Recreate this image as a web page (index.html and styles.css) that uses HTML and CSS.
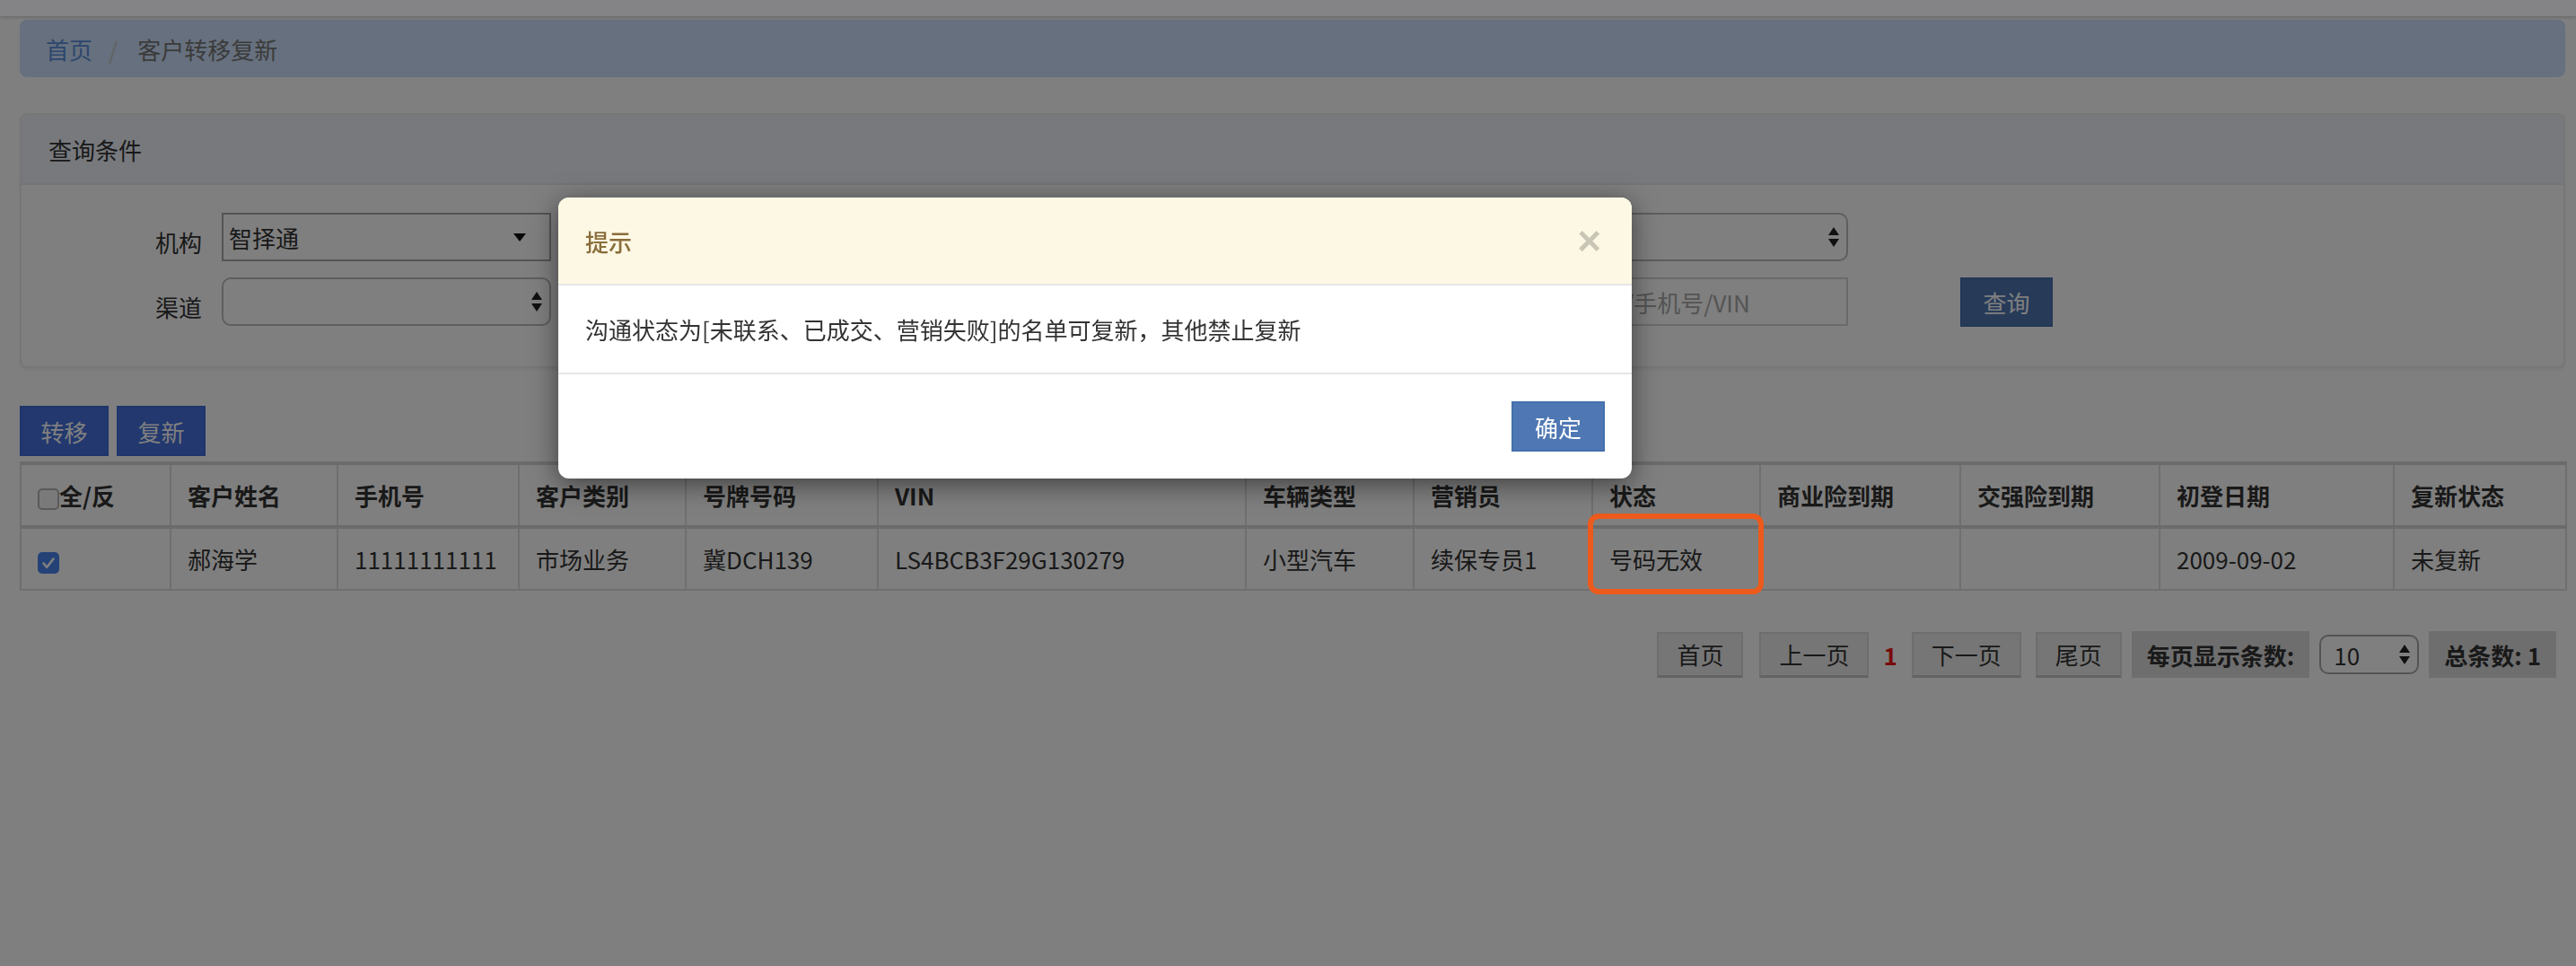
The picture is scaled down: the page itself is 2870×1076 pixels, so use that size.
FILE: index.html
```html
<!DOCTYPE html>
<html lang="zh-CN">
<head>
<meta charset="utf-8">
<title>客户转移复新</title>
<link rel="stylesheet" href="styles.css">
</head>
<body>
<div class="frame-top"></div>
<main class="page">
  <ol class="breadcrumb">
    <li><a href="#">首页</a></li>
    <li class="sep">/</li>
    <li class="active">客户转移复新</li>
  </ol>

  <section class="panel">
    <div class="panel-heading">查询条件</div>
    <div class="panel-body">
      <form class="query-form">
        <label class="form-label">机构</label>
        <div class="select square">
          <select><option>智择通</option></select>
          <svg class="caret" width="14" height="9" viewBox="0 0 14 9"><path d="M0 0h14L7 9z" fill="#111"/></svg>
        </div>
        <label class="form-label">营销员</label>
        <div class="select rounded">
          <select><option></option></select>
          <svg class="updown" width="12" height="22" viewBox="0 0 12 22"><path d="M6 0l6 9H0z M0 13h12l-6 9z" fill="#222"/></svg>
        </div>
        <label class="form-label">沟通状态</label>
        <div class="select rounded">
          <select><option></option></select>
          <svg class="updown" width="12" height="22" viewBox="0 0 12 22"><path d="M6 0l6 9H0z M0 13h12l-6 9z" fill="#222"/></svg>
        </div>
        <span></span>
        <span></span>

        <label class="form-label">渠道</label>
        <div class="select rounded">
          <select><option></option></select>
          <svg class="updown" width="12" height="22" viewBox="0 0 12 22"><path d="M6 0l6 9H0z M0 13h12l-6 9z" fill="#222"/></svg>
        </div>
        <label class="form-label">复新状态</label>
        <div class="select rounded">
          <select><option></option></select>
          <svg class="updown" width="12" height="22" viewBox="0 0 12 22"><path d="M6 0l6 9H0z M0 13h12l-6 9z" fill="#222"/></svg>
        </div>
        <label class="form-label">客户信息</label>
        <input class="text-input" type="text" placeholder="客户姓名/手机号/VIN">
        <span></span>
        <button type="button" class="btn btn-primary btn-query">查询</button>
      </form>
    </div>
  </section>

  <div class="toolbar">
    <button type="button" class="btn btn-action">转移</button>
    <button type="button" class="btn btn-action">复新</button>
  </div>

  <table class="grid">
    <colgroup>
      <col class="w-chk"><col class="w-name"><col class="w-phone"><col class="w-type">
      <col class="w-plate"><col class="w-vin"><col class="w-car"><col class="w-sales">
      <col class="w-state"><col class="w-biz"><col class="w-tci"><col class="w-reg"><col class="w-renew">
    </colgroup>
    <thead>
      <tr>
        <th><span class="check"></span>全/反</th>
        <th>客户姓名</th>
        <th>手机号</th>
        <th>客户类别</th>
        <th>号牌号码</th>
        <th>VIN</th>
        <th>车辆类型</th>
        <th>营销员</th>
        <th>状态</th>
        <th>商业险到期</th>
        <th>交强险到期</th>
        <th>初登日期</th>
        <th>复新状态</th>
      </tr>
    </thead>
    <tbody>
      <tr>
        <td><span class="check checked"><svg width="24" height="24" viewBox="0 0 24 24"><polyline points="6.5,12.5 10.3,16.8 17.5,7.5" fill="none" stroke="#fff" stroke-width="2.6" stroke-linecap="round" stroke-linejoin="round"/></svg></span></td>
        <td>郝海学</td>
        <td>11111111111</td>
        <td>市场业务</td>
        <td>冀DCH139</td>
        <td>LS4BCB3F29G130279</td>
        <td>小型汽车</td>
        <td>续保专员1</td>
        <td class="marked">号码无效<span class="annotation"></span></td>
        <td></td>
        <td></td>
        <td>2009-09-02</td>
        <td>未复新</td>
      </tr>
    </tbody>
  </table>

  <div class="pager">
    <button type="button" class="pg-btn">首页</button>
    <button type="button" class="pg-btn pg-prev">上一页</button>
    <span class="pg-current">1</span>
    <button type="button" class="pg-btn">下一页</button>
    <button type="button" class="pg-btn pg-last">尾页</button>
    <span class="pg-label">每页显示条数:</span>
    <div class="select pg-size">
      <select><option>10</option></select>
      <svg class="updown" width="12" height="22" viewBox="0 0 12 22"><path d="M6 0l6 9H0z M0 13h12l-6 9z" fill="#222"/></svg>
    </div>
    <span class="pg-label">总条数: 1</span>
  </div>
</main>

<div class="backdrop"></div>

<div class="modal" role="dialog">
  <div class="modal-header">
    <h4 class="modal-title">提示</h4>
    <button type="button" class="close">×</button>
  </div>
  <div class="modal-body">沟通状态为[未联系、已成交、营销失败]的名单可复新，其他禁止复新</div>
  <div class="modal-footer">
    <button type="button" class="btn btn-primary btn-ok">确定</button>
  </div>
</div>
</body>
</html>
```
FILE: styles.css
```css
* { box-sizing: border-box; }

html, body {
  margin: 0;
  height: 100%;
}

body {
  background: #fff;
  font-family: "Noto Sans CJK SC", "Noto Sans", sans-serif;
  font-size: 26px;
  color: #333;
  overflow: hidden;
}

.frame-top {
  position: relative;
  z-index: 11;
  height: 18px;
  background: #848486;
  box-shadow: 0 2px 3px rgba(0, 0, 0, 0.15);
}

.page {
  padding: 4px 12px 0 22px;
}

/* breadcrumb */
.breadcrumb {
  list-style: none;
  margin: 0;
  height: 64px;
  padding: 0 29px;
  display: flex;
  align-items: center;
  background: #cde0fc;
  border-radius: 8px;
}
.breadcrumb a { color: #5a8edb; text-decoration: none; }
.breadcrumb .sep { color: #c4c4c4; margin: 0 22px 0 18px; }
.breadcrumb .active { color: #777; }

/* panel */
.panel {
  margin-top: 40px;
  border: 2px solid #ececec;
  border-radius: 8px;
  background: #fff;
  box-shadow: 0 2px 3px rgba(0, 0, 0, 0.06);
  overflow: hidden;
}
.panel-heading {
  height: 78px;
  padding: 0 30px;
  display: flex;
  align-items: center;
  background: #eef3fb;
  border-bottom: 2px solid #e4e9f1;
}
.panel-body {
  padding: 31px 0 45px;
}

.query-form {
  display: grid;
  grid-template-columns: 223px 367px 356px 367px 355px 367px 125px 103px;
  grid-auto-rows: 54px;
  row-gap: 18px;
}
.form-label {
  display: flex;
  align-items: center;
  justify-content: flex-end;
  padding: 10px 22px 0 0;
}

.select {
  position: relative;
}
.select select {
  -webkit-appearance: none;
  appearance: none;
  width: 100%;
  height: 100%;
  margin: 0;
  font: inherit;
  color: #333;
  padding: 0 40px 0 6px;
  background: #fff;
  border: 2px solid #a8a8a8;
  border-radius: 0;
  outline: none;
}
.select.rounded select {
  border-color: #bdbdbd;
  border-radius: 10px;
  background: #fefefe;
}
.select .caret {
  position: absolute;
  right: 28px;
  top: 23px;
  pointer-events: none;
}
.select .updown {
  position: absolute;
  right: 10px;
  top: 50%;
  margin-top: -11px;
  pointer-events: none;
}

.text-input {
  width: 100%;
  height: 100%;
  margin: 0;
  font: inherit;
  color: #333;
  border: 2px solid #d4d4d4;
  padding: 0 12px;
  outline: none;
}
.text-input::placeholder { color: #a8a8a8; }

/* buttons */
.btn {
  font: inherit;
  color: #fff;
  border: 2px solid transparent;
  padding: 0;
  margin: 0;
  cursor: pointer;
}
.btn-primary {
  background: #4f77b3;
  border-color: #4470ad;
}
.btn-query {
  width: 103px;
  height: 55px;
}
.btn-action {
  width: 99px;
  height: 56px;
  background: #4471dc;
  border-color: #3e6bd6;
}

.toolbar {
  display: flex;
  gap: 9px;
  margin: 42px 0 6px;
}

/* table */
.grid {
  width: 2836px;
  border-collapse: collapse;
  table-layout: fixed;
}
.grid th,
.grid td {
  border: 2px solid #dedede;
  padding: 16px 18px;
  line-height: 35px;
  text-align: left;
  white-space: nowrap;
  vertical-align: middle;
}
.grid thead th {
  border-top: 4px solid #d6d6d6;
  border-bottom: 4px solid #d6d6d6;
  font-weight: bold;
}
.w-chk { width: 167px; }
.w-name { width: 186px; }
.w-phone { width: 202px; }
.w-type { width: 186px; }
.w-plate { width: 214px; }
.w-vin { width: 410px; }
.w-car { width: 187px; }
.w-sales { width: 199px; }
.w-state { width: 187px; }
.w-biz { width: 223px; }
.w-tci { width: 222px; }
.w-reg { width: 261px; }
.w-renew { width: 192px; }

.check {
  display: inline-block;
  width: 24px;
  height: 24px;
  vertical-align: -5px;
  border: 2px solid #b4b4b4;
  border-radius: 5px;
  background: #f5f5f5;
}
.check.checked {
  border: 0;
  background: #4a84ee;
}
.check svg { display: block; }

.marked { position: relative; }
.annotation {
  position: absolute;
  z-index: 20;
  top: -17px;
  bottom: -6px;
  left: -6px;
  right: -5px;
  border: 6px solid #ec5a1c;
  border-radius: 12px;
}

/* pager */
.pager {
  display: flex;
  justify-content: flex-end;
  align-items: center;
  gap: 11px;
  margin-top: 45px;
  padding-right: 10px;
}
.pg-btn {
  height: 51px;
  padding: 0 20px;
  font: inherit;
  color: #333;
  background: #ececec;
  border: 2px solid #dcdcdc;
  border-bottom: 3px solid #c6c6c6;
}
.pg-prev { margin-left: 7px; }
.pg-last { margin-left: 5px; }
.pg-current {
  margin: 0 5px;
  color: #f01414;
  font-weight: bold;
}
.pg-label {
  height: 52px;
  display: flex;
  align-items: center;
  padding: 0 17px;
  background: #dcdcdc;
  font-weight: bold;
}
.pg-size {
  width: 111px;
  height: 44px;
}
.pg-size select {
  border-radius: 10px;
  border-color: #a9a9a9;
  padding-left: 14px;
}

/* modal */
.backdrop {
  position: fixed;
  top: 18px;
  left: 0;
  right: 0;
  bottom: 0;
  z-index: 10;
  background: rgba(0, 0, 0, 0.5);
}
.modal {
  position: fixed;
  left: 622px;
  top: 220px;
  width: 1196px;
  z-index: 30;
  background: #fff;
  border-radius: 12px;
  box-shadow: 0 6px 30px rgba(0, 0, 0, 0.5);
  overflow: hidden;
}
.modal-header {
  height: 98px;
  display: flex;
  align-items: center;
  justify-content: space-between;
  padding: 0 34px 0 30px;
  background: #fcf8e4;
  border-bottom: 2px solid #e6e6e6;
}
.modal-title {
  margin: 0;
  font-size: 26px;
  font-weight: 500;
  color: #8a6d3b;
}
.close {
  font-family: "Liberation Sans", sans-serif;
  font-size: 46px;
  font-weight: bold;
  line-height: 1;
  color: rgba(0, 0, 0, 0.2);
  background: none;
  border: 0;
  padding: 0;
}
.modal-body {
  height: 99px;
  padding: 0 30px;
  display: flex;
  align-items: center;
  border-bottom: 2px solid #e6e6e6;
}
.modal-footer {
  padding: 30px 30px;
  display: flex;
  justify-content: flex-end;
}
.btn-ok {
  width: 104px;
  height: 56px;
}
```
